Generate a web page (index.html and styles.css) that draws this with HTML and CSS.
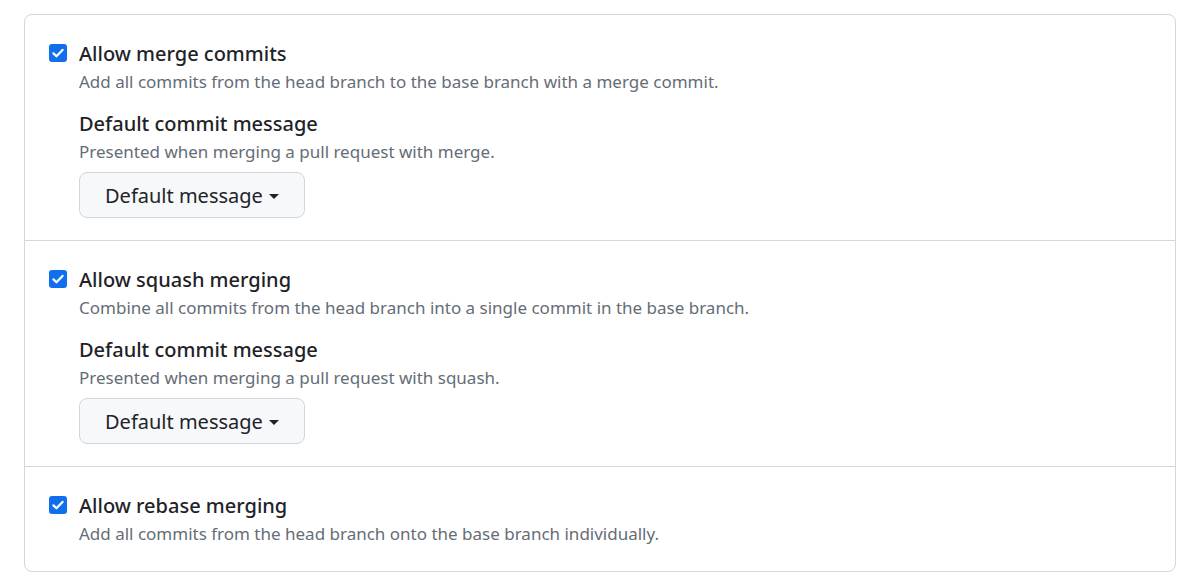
FILE: index.html
```html
<!DOCTYPE html>
<html>
<head>
<meta charset="utf-8">
<link rel="stylesheet" href="styles.css">
</head>
<body>
<div class="box">
  <div class="section">
    <label class="option">
      <span class="check"><svg viewBox="0 0 16 16" width="14" height="14"><path d="M2.8 8.4l3.4 3.3 7-7.2" fill="none" stroke="#fff" stroke-width="2.6" stroke-linecap="round" stroke-linejoin="round"/></svg></span>
      <span class="text">
        <span class="title">Allow merge commits</span>
        <span class="desc">Add all commits from the head branch to the base branch with a merge commit.</span>
      </span>
    </label>
    <div class="sub">
      <div class="subtitle">Default commit message</div>
      <div class="desc">Presented when merging a pull request with merge.</div>
      <button class="btn">Default message <span class="caret"></span></button>
    </div>
  </div>
  <div class="section">
    <label class="option">
      <span class="check"><svg viewBox="0 0 16 16" width="14" height="14"><path d="M2.8 8.4l3.4 3.3 7-7.2" fill="none" stroke="#fff" stroke-width="2.6" stroke-linecap="round" stroke-linejoin="round"/></svg></span>
      <span class="text">
        <span class="title">Allow squash merging</span>
        <span class="desc">Combine all commits from the head branch into a single commit in the base branch.</span>
      </span>
    </label>
    <div class="sub">
      <div class="subtitle">Default commit message</div>
      <div class="desc">Presented when merging a pull request with squash.</div>
      <button class="btn">Default message <span class="caret"></span></button>
    </div>
  </div>
  <div class="section last">
    <label class="option">
      <span class="check"><svg viewBox="0 0 16 16" width="14" height="14"><path d="M2.8 8.4l3.4 3.3 7-7.2" fill="none" stroke="#fff" stroke-width="2.6" stroke-linecap="round" stroke-linejoin="round"/></svg></span>
      <span class="text">
        <span class="title">Allow rebase merging</span>
        <span class="desc">Add all commits from the head branch onto the base branch individually.</span>
      </span>
    </label>
  </div>
</div>
</body>
</html>
```
FILE: styles.css
```css
* { box-sizing: border-box; }
body {
  margin: 0;
  padding: 14px 16px 0 24px;
  background: #fff;
  font-family: "Noto Sans", "Liberation Sans", sans-serif;
  color: #1f2328;
}
.box {
  width: 1152px;
  border: 1px solid #d0d7de;
  border-radius: 8px;
}
.section {
  padding: 25px 24px 22px 24px;
  border-bottom: 1px solid #d0d7de;
}
.section.last {
  border-bottom: none;
  padding-bottom: 23px;
}
.option {
  display: flex;
  gap: 12px;
  align-items: flex-start;
}
.check {
  flex: none;
  width: 18px;
  height: 18px;
  margin-top: 4px;
  background: #0f6fec;
  border-radius: 3px;
  display: flex;
  align-items: center;
  justify-content: center;
}
.text { display: flex; flex-direction: column; }
.title {
  font-size: 20px;
  line-height: 28px;
  font-weight: 500;
}
.desc {
  font-size: 17px;
  line-height: 28px;
  color: #656d76;
}
.sub {
  padding-left: 30px;
  margin-top: 14px;
}
.subtitle {
  font-size: 20px;
  line-height: 28px;
  font-weight: 500;
}
.btn {
  margin-top: 6px;
  height: 46px;
  padding: 0 25px;
  background: #f6f8fa;
  border: 1px solid #d0d7de;
  border-radius: 8px;
  font-family: inherit;
  font-size: 20px;
  font-weight: 400;
  color: #1f2328;
  display: inline-flex;
  align-items: center;
  gap: 6px;
}
.caret {
  width: 0;
  height: 0;
  border-left: 5px solid transparent;
  border-right: 5px solid transparent;
  border-top: 5px solid #1f2328;
  margin-top: 2px;
}
```
